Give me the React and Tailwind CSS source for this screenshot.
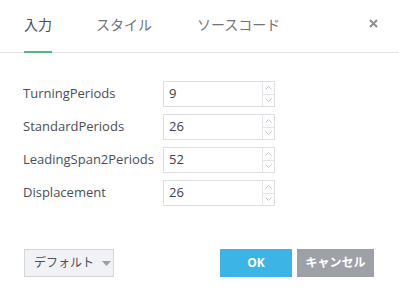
import React from "react";

const rows = [
  ["TurningPeriods", "9"],
  ["StandardPeriods", "26"],
  ["LeadingSpan2Periods", "52"],
  ["Displacement", "26"],
];

function Spinner() {
  return (
    <div className="flex flex-col w-[12px] border-l border-[#e2e4e9]">
      <div className="flex-1 flex items-center justify-center border-b border-[#e2e4e9]">
        <svg width="7" height="4" viewBox="0 0 7 4">
          <path d="M0.5 3.5 L3.5 0.5 L6.5 3.5" fill="none" stroke="#c3c6cd" strokeWidth="1" />
        </svg>
      </div>
      <div className="flex-1 flex items-center justify-center">
        <svg width="7" height="4" viewBox="0 0 7 4">
          <path d="M0.5 0.5 L3.5 3.5 L6.5 0.5" fill="none" stroke="#c3c6cd" strokeWidth="1" />
        </svg>
      </div>
    </div>
  );
}

export default function App() {
  return (
    <div
      className="w-[399px] h-[303px] bg-white flex flex-col"
      style={{ fontFamily: '"Open Sans", "Noto Sans CJK JP", sans-serif' }}
    >
      <div className="h-[53px] border-b border-[#e0e3eb] flex items-start pl-[24px] pr-[21px]">
        <div className="h-[53px] -mb-px border-b-2 border-[#52b68a] pt-[15px] text-[14px] leading-[20px] text-[#4a4e57]">
          入力
        </div>
        <div className="ml-[44px] pt-[15px] text-[14px] leading-[20px] text-[#6f737b]">スタイル</div>
        <div className="ml-[45px] pt-[15px] text-[14px] leading-[20px] text-[#6f737b]">ソースコード</div>
        <div className="ml-auto mt-[19px]">
          <svg width="9" height="9" viewBox="0 0 9 9">
            <path d="M1 1 L8 8 M8 1 L1 8" stroke="#8e9097" strokeWidth="2" />
          </svg>
        </div>
      </div>

      <div className="flex flex-col gap-[7px] mt-[28px] pl-[23px]">
        {rows.map(([label, value]) => (
          <div key={label} className="flex items-center h-[26px]">
            <div className="w-[140px] text-[13px] text-[#4a4e57]">{label}</div>
            <div className="flex w-[112px] h-[26px] border border-[#dcdee3] bg-white">
              <div className="flex-1 flex items-center pl-[5px] text-[13px] text-[#3d4047]">{value}</div>
              <Spinner />
            </div>
          </div>
        ))}
      </div>

      <div className="flex items-center mt-[43px] pl-[24px] pr-[25px]">
        <div className="flex shrink-0 items-center whitespace-nowrap w-[90px] h-[28px] border border-[#d4d6dc] bg-[#f1f2f6] pl-[9px] text-[12px] text-[#4a4e57]">
          <span>デフォルト</span>
          <svg className="ml-[8px] shrink-0" width="9" height="5" viewBox="0 0 9 5">
            <path d="M0 0 L9 0 L4.5 5 Z" fill="#9c9ea5" />
          </svg>
        </div>
        <div className="ml-auto flex gap-[5px]">
          <div className="w-[72px] h-[28px] bg-[#3cb4e6] flex items-center justify-center text-white text-[12px] font-bold">
            OK
          </div>
          <div className="w-[77px] h-[28px] bg-[#9ea0a7] flex items-center justify-center whitespace-nowrap text-white text-[12px] font-bold">
            キャンセル
          </div>
        </div>
      </div>
    </div>
  );
}
